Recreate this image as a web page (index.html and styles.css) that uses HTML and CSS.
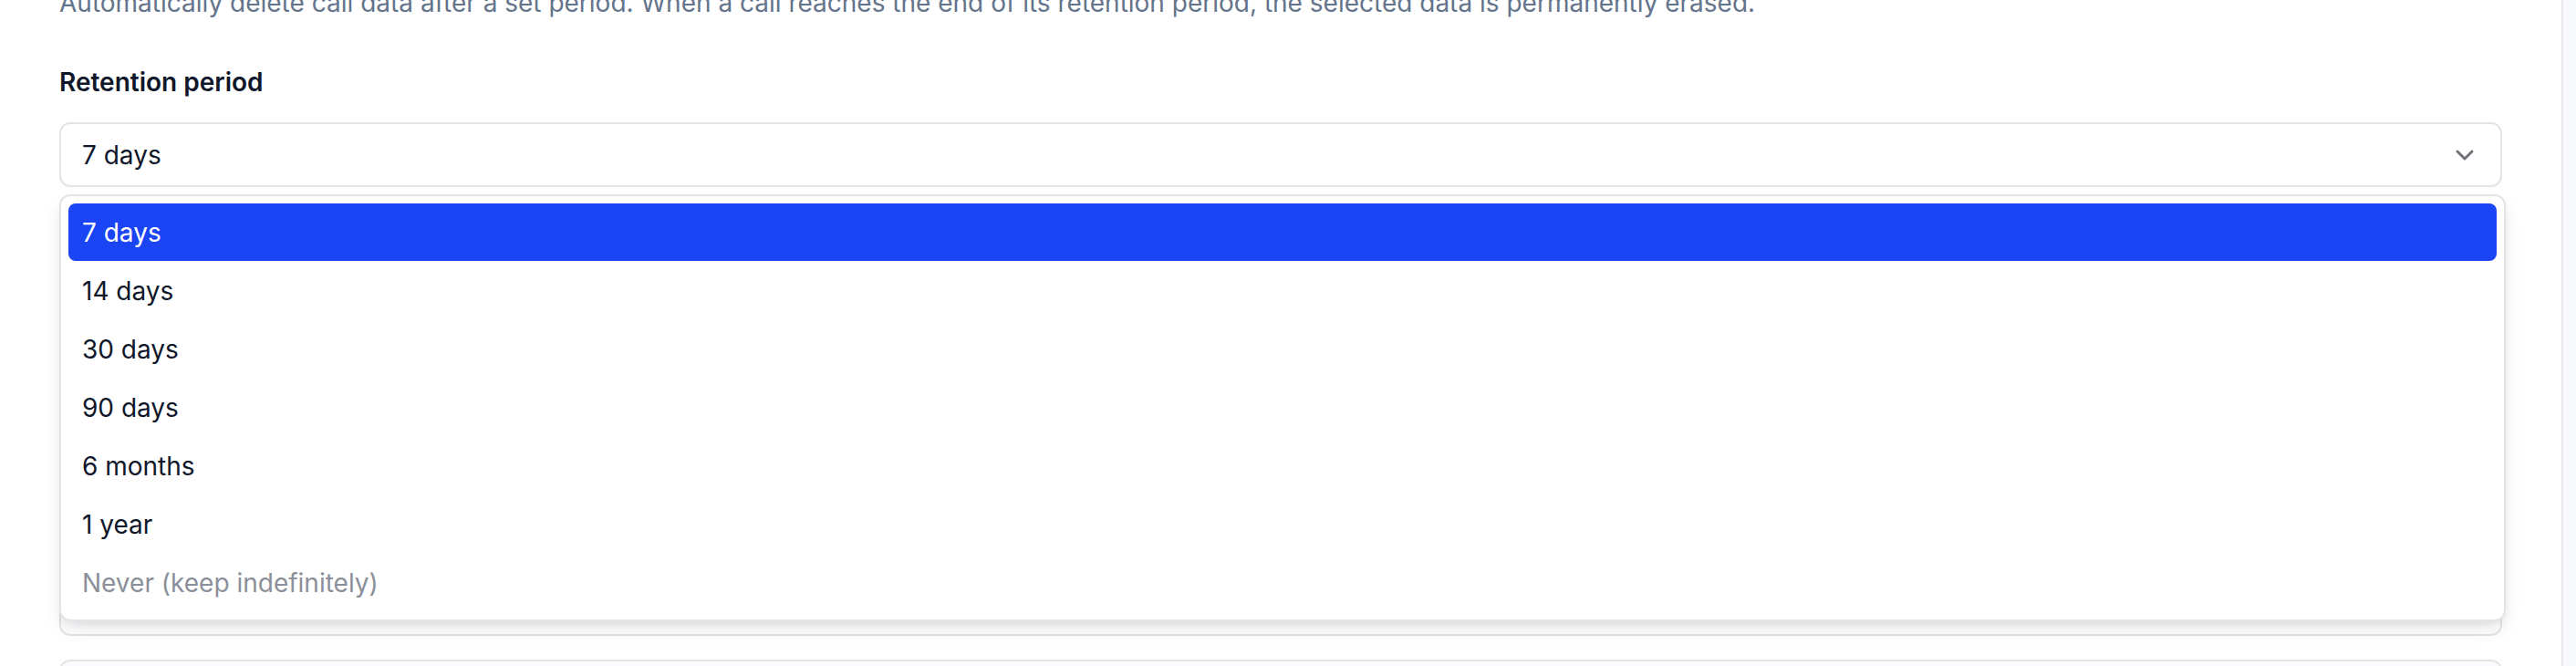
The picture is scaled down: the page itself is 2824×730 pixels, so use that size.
FILE: index.html
```html
<!DOCTYPE html>
<html lang="en">
<head>
<meta charset="utf-8">
<title>Retention period</title>
<link rel="stylesheet" href="styles.css">
</head>
<body>
<div class="page">
  <main class="content">
    <p class="desc">Automatically delete call data after a set period. When a call reaches the end of its retention period, the selected data is permanently erased.</p>
    <div class="field">
      <label class="label">Retention period</label>
      <div class="select-wrap">
        <div class="select">
          <span class="select-value">7 days</span>
          <svg class="chevron" viewBox="0 0 24 24" width="32" height="32" fill="none" stroke="currentColor" stroke-width="2.2" stroke-linecap="round" stroke-linejoin="round"><path d="m6 9 6 6 6-6"/></svg>
        </div>
        <ul class="menu">
          <li class="option selected">7 days</li>
          <li class="option">14 days</li>
          <li class="option">30 days</li>
          <li class="option">90 days</li>
          <li class="option">6 months</li>
          <li class="option">1 year</li>
          <li class="option disabled">Never (keep indefinitely)</li>
        </ul>
      </div>
    </div>
    <div class="box box-a"></div>
    <div class="box box-b"></div>
  </main>
  <div class="scrollbar"></div>
</div>
</body>
</html>
```

FILE: styles.css
```css
* { box-sizing: border-box; }
html, body {
  margin: 0;
  padding: 0;
  background: #ffffff;
  font-family: Inter, "Noto Sans", "Liberation Sans", sans-serif;
  color: #0f172a;
}
.page {
  display: flex;
  height: 730px;
  overflow: hidden;
}
.content {
  flex: 1;
  padding: 0 65px 0 65px;
  display: flex;
  flex-direction: column;
}
.desc {
  margin: -17px 0 0 0;
  font-size: 28px;
  line-height: 40px;
  color: #64748b;
}
.field {
  margin-top: 47px;
  display: flex;
  flex-direction: column;
}
.label {
  font-size: 28px;
  line-height: 40px;
  font-weight: 600;
  color: #0f172a;
}
.select-wrap {
  position: relative;
  margin-top: 24px;
}
.select {
  height: 71px;
  border: 2px solid #e4e4e7;
  border-radius: 12px;
  background: #fff;
  padding: 0 23px 0 23px;
  display: flex;
  align-items: center;
  justify-content: space-between;
  font-size: 28px;
  color: #0f172a;
}
.chevron {
  color: #71717a;
  flex: none;
}
.menu {
  position: absolute;
  top: calc(100% + 8px);
  left: 0;
  right: -4px;
  margin: 0;
  padding: 8px;
  list-style: none;
  background: #fff;
  border: 2px solid #e4e4e7;
  border-radius: 12px;
  box-shadow: 0 10px 22px -4px rgba(15, 23, 42, 0.12), 0 4px 8px -2px rgba(15, 23, 42, 0.07);
  z-index: 10;
}
.option {
  height: 64px;
  display: flex;
  align-items: center;
  padding-left: 15px;
  border-radius: 8px;
  font-size: 28px;
  color: #0f172a;
}
.option.selected {
  background: #1b44f5;
  color: #ffffff;
  height: 63px;
  margin-bottom: 1px;
}
.option.disabled {
  color: #8b8f9a;
}
.box {
  border: 2px solid #e4e4e7;
  border-radius: 12px;
  background: #fff;
  flex: none;
}
.box-a {
  margin-top: 24px;
  height: 468px;
}
.box-b {
  margin-top: 26px;
  height: 80px;
  background: #fbfbfd;
}
.scrollbar {
  width: 16px;
  flex: none;
  background: #f8f9fb;
  border-left: 2px solid #e8e8ec;
}
```
